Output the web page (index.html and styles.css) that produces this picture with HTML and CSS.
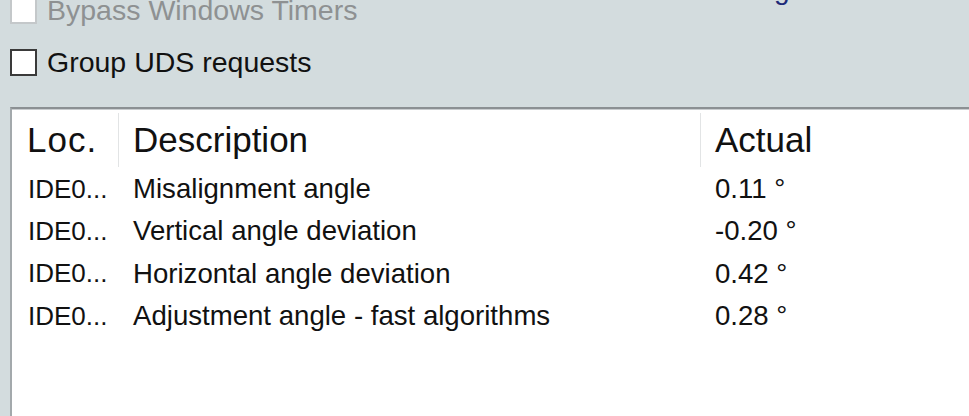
FILE: index.html
```html
<!DOCTYPE html>
<html lang="en">
<head>
    <meta charset="UTF-8">
    <title>Measuring values</title>
    <link rel="stylesheet" href="styles.css">
</head>
<body>
    <div class="options">
        <div class="checks">
            <label class="check disabled"><span class="box"></span>Bypass Windows Timers</label>
            <label class="check"><span class="box"></span>Group UDS requests</label>
        </div>
        <div class="advanced">Use advanced measurin<span class="focus">g</span> values</div>
    </div>
    <div class="panel">
        <div class="grid head">
            <div class="cell">Loc.</div>
            <div class="cell sep">Description</div>
            <div class="cell sep">Actual</div>
        </div>
        <div class="grid row">
            <div class="cell">IDE0...</div>
            <div class="cell">Misalignment angle</div>
            <div class="cell">0.11 °</div>
        </div>
        <div class="grid row">
            <div class="cell">IDE0...</div>
            <div class="cell">Vertical angle deviation</div>
            <div class="cell">-0.20 °</div>
        </div>
        <div class="grid row">
            <div class="cell">IDE0...</div>
            <div class="cell">Horizontal angle deviation</div>
            <div class="cell">0.42 °</div>
        </div>
        <div class="grid row">
            <div class="cell">IDE0...</div>
            <div class="cell">Adjustment angle - fast algorithms</div>
            <div class="cell">0.28 °</div>
        </div>
    </div>
</body>
</html>
```

FILE: styles.css
```css
html, body {
    height: 100%;
}
body {
    margin: 0;
    background-color: #d3dcde;
    font-family: 'Liberation Sans', Arial, sans-serif;
    color: #111;
    overflow: hidden;
    display: flex;
    flex-direction: column;
}
.options {
    display: flex;
    height: 107px;
    flex-shrink: 0;
}
.checks {
    display: flex;
    flex-direction: column;
    margin-top: -8px;
    padding-left: 10px;
    gap: 16px;
    width: 460px;
}
.check {
    display: flex;
    align-items: center;
    gap: 10px;
    font-size: 28.5px;
    height: 36px;
}
.box {
    width: 23px;
    height: 23px;
    border: 2px solid #3a3a3a;
    background-color: #fff;
}
.check.disabled {
    color: #8e9192;
}
.check.disabled .box {
    border-color: #c4c8ca;
}
.advanced {
    margin-top: -26px;
    padding-left: 2px;
    font-size: 28px;
    height: 34px;
    color: #f4f7f8;
    white-space: nowrap;
}
.advanced .focus {
    color: #1d2a78;
}
.panel {
    flex: 1;
    margin-left: 10px;
    background-color: #fff;
    border-top: 2px solid #8b9093;
    border-left: 2px solid #a3a9ac;
    box-shadow: inset 0 1px 0 #c9cdcf;
}
.grid {
    display: grid;
    grid-template-columns: 106px 582px 1fr;
}
.head {
    padding-top: 4px;
    height: 54px;
    font-size: 35px;
    margin-bottom: 1px;
}
.head .cell {
    display: flex;
    align-items: center;
}
.head .cell:first-child {
    letter-spacing: 1px;
}
.head .sep {
    border-left: 1px solid #e2e4e5;
}
.cell {
    padding-left: 15px;
    white-space: nowrap;
}
.head .sep {
    padding-left: 14px;
}
.row {
    height: 42.3px;
    align-items: center;
    font-size: 27.6px;
}
.row .cell:first-child {
    padding-left: 16px;
    font-size: 26px;
}
```
